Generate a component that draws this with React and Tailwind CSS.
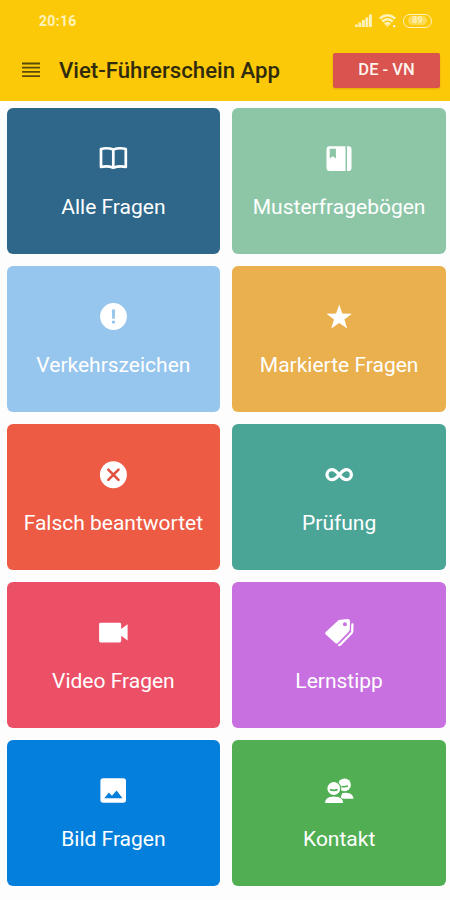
import React from "react";

const BookOpen = () => (
  <g fill="none" stroke="#fff" strokeWidth="2.7" strokeLinejoin="round">
    <path d="M4 6Q10.5 4.2 16.3 6.6Q22.5 4.2 28.8 6V24Q22.5 22.6 16.3 24.8Q10.5 22.6 4 24Z" />
    <path d="M16.3 6.6V24.8" />
  </g>
);

const Book = () => (
  <>
    <path fill="#fff" fillRule="evenodd" d="M6.5 3.3H22.5V28H6.5Q3.5 28 3.5 25V6.3Q3.5 3.3 6.5 3.3ZM6.7 5.8V15.5L9.8 13.2L12.9 15.5V5.8Z" />
    <path fill="#fff" d="M24 3.3H25.5Q28.5 3.3 28.5 6.3V25Q28.5 28 25.5 28H24Z" />
  </>
);

const Alert = () => (
  <path fill="#fff" fillRule="evenodd" d="M16.5 2.1a13.4 13.4 0 1 1 0 26.8a13.4 13.4 0 1 1 0-26.8ZM14.9 8.6L15.2 17.8H17.8L18.1 8.6ZM15 19.8V22.5H18V19.8Z" />
);

const Star = () => (
  <path fill="#fff" d="M16.2 3.6L19.3 12.5L28.9 12.7L21.4 18.4L24.2 27.6L16.2 22.1L8.2 27.6L11 18.4L3.5 12.7L13.1 12.5Z" />
);

const Wrong = () => (
  <>
    <circle cx="16.4" cy="15.8" r="13.5" fill="#fff" />
    <path d="M11.3 10.7L21.5 20.9M21.5 10.7L11.3 20.9" stroke="#e0513f" strokeWidth="2.6" strokeLinecap="round" />
  </>
);

const Infinity = () => (
  <path fill="none" stroke="#fff" strokeWidth="3.2" d="M16.2 15.7C13.7 12.9 12 10.7 9 10.7A5 5 0 0 0 9 20.7C12 20.7 13.7 18.5 16.2 15.7S20.4 10.7 23.4 10.7A5 5 0 0 1 23.4 20.7C20.4 20.7 18.7 18.5 16.2 15.7Z" />
);

const Video = () => (
  <path fill="#fff" d="M3.5 5.8H22.8Q24.2 5.8 24.2 7.2V12L30.6 7.3V23.6L24.2 18.8V24Q24.2 25.4 22.8 25.4H3.5Q2.1 25.4 2.1 24V7.2Q2.1 5.8 3.5 5.8Z" />
);

const Tags = () => (
  <>
    <path fill="#fff" fillRule="evenodd" d="M17.2 2.7L24.9 1.9Q27 1.9 27 4L26.8 12.5Q26.6 13.8 25.7 14.8L14.9 26Q13.6 27.1 12.3 25.9L2.8 17.4Q1.6 16.3 2.7 15L14.9 3.8Q15.8 2.9 17.2 2.7ZM21.9 5.3a2 2 0 1 0 0 4a2 2 0 1 0 0-4Z" />
    <path fill="none" stroke="#fff" strokeWidth="2.3" strokeLinecap="round" strokeLinejoin="round" d="M29.4 7.5L29.2 14.4Q29.1 15.5 28.3 16.3L17.4 27.5L16.2 28" />
  </>
);

const Image = () => (
  <path fill="#fff" fillRule="evenodd" d="M6.2 3.2H26.2Q29 3.2 29 6V25Q29 27.8 26.2 27.8H6.2Q3.4 27.8 3.4 25V6Q3.4 3.2 6.2 3.2ZM7.3 23.3H25.5L19.6 15.6L15 20.8L11.8 17.6Z" />
);

const People = () => (
  <>
    <g fill="#fff">
      <circle cx="21.5" cy="9.8" r="6.4" />
      <path d="M17 23.8L19.4 18Q29.8 16.2 30.6 23.8Z" />
    </g>
    <circle cx="10.8" cy="13.5" r="7" fill="#fff" stroke="#4caf50" strokeWidth="1.1" />
    <path d="M1.4 28.5Q1.6 21 11 21T20.8 28.5Z" fill="#fff" stroke="#4caf50" strokeWidth="1" />
    <path d="M7 14.6Q11 16.2 14.6 14.6M18.5 11.4Q21.4 12.3 25 11" fill="none" stroke="#4caf50" strokeWidth="1.6" />
  </>
);

const cards = [
  { label: "Alle Fragen", color: "bg-[#2e678a]", Icon: BookOpen },
  { label: "Musterfragebögen", color: "bg-[#8cc6a7]", Icon: Book },
  { label: "Verkehrszeichen", color: "bg-[#96c5ed]", Icon: Alert },
  { label: "Markierte Fragen", color: "bg-[#e9b04d]", Icon: Star },
  { label: "Falsch beantwortet", color: "bg-[#ed5b45]", Icon: Wrong },
  { label: "Prüfung", color: "bg-[#4ba597]", Icon: Infinity },
  { label: "Video Fragen", color: "bg-[#ec5067]", Icon: Video },
  { label: "Lernstipp", color: "bg-[#c870df]", Icon: Tags },
  { label: "Bild Fragen", color: "bg-[#047fdb]", Icon: Image },
  { label: "Kontakt", color: "bg-[#51ae53]", Icon: People },
];

function StatusBar() {
  return (
    <div className="flex h-[41px] items-center justify-between pr-[18px] pl-[39px] text-[#fff3bd]">
      <span className="pt-px text-[14px] font-bold tracking-[0.3px]">20:16</span>
      <div className="flex items-center gap-[7px]">
        <svg width="17" height="14" viewBox="0 0 17 14" fill="currentColor">
          <path d="M0 10.5H2.8V13H0ZM3.5 8.5H6.3V13H3.5ZM7 6H9.8V13H7ZM10.5 3.5H13.3V13H10.5ZM14 .5H16.9V13H14Z" />
        </svg>
        <svg width="17" height="14" viewBox="0 0 17 14" fill="none" stroke="currentColor" strokeWidth="2.4">
          <path d="M.8 4.5Q8.5-1.8 16.2 4.5M3.3 7.5Q8.5 3.2 13.7 7.5M5.8 10.2Q8.5 8.1 11.2 10.2" />
          <path d="M7 11H10L8.5 13ZM14 11H16.3V13.3H14Z" fill="currentColor" stroke="none" />
        </svg>
        <div className="flex h-[14px] w-[29px] items-center justify-center rounded-full border-[1.5px] border-current">
          <span className="rounded-full bg-[#fddb55] px-[4px] text-[9px] leading-[9px] font-bold">89</span>
        </div>
      </div>
    </div>
  );
}

export default function App() {
  return (
    <main className="h-[900px] w-[450px] overflow-hidden bg-[#fdfdfd] font-['Roboto',sans-serif]">
      <header className="h-[101px] bg-[#fcc908]">
        <StatusBar />
        <div className="flex h-[58px] items-center pr-[10px] pl-[22px]">
          <svg width="18" height="16" viewBox="0 0 18 16" stroke="#5b4b0b" strokeWidth="1.8">
            <path d="M0 1.5H18M0 5.7H18M0 9.9H18M0 14.1H18" />
          </svg>
          <h1 className="ml-[19px] pt-[2px] text-[22.2px] font-medium whitespace-nowrap text-[#302b0c]">Viet-Führerschein App</h1>
          <button className="ml-auto h-[35px] w-[107px] rounded-[2px] bg-[#d9534f] pt-px text-[16.5px] font-medium text-[#fff3ed] shadow-[0_1px_2px_#b8860b66]">
            DE - VN
          </button>
        </div>
      </header>
      <section className="grid grid-cols-2 gap-[12px] pt-[7px] pr-[4px] pl-[6.5px]">
        {cards.map(({ label, color, Icon }) => (
          <div key={label} className={`flex h-[146px] flex-col items-center rounded-[6px] pt-[35px] ${color}`}>
            <svg width="32" height="32" viewBox="0 0 32 32">
              <Icon />
            </svg>
            <span className="mt-[17px] text-[21px] leading-[30px] whitespace-nowrap text-white">{label}</span>
          </div>
        ))}
      </section>
    </main>
  );
}
